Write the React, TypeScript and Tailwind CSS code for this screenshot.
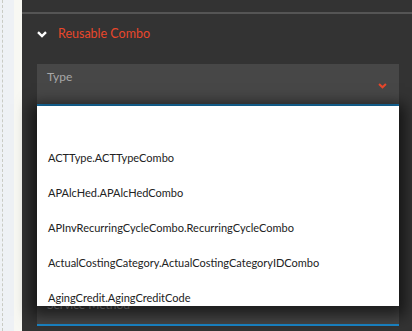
import { useState } from 'react'

const options = [
  '',
  'ACTType.ACTTypeCombo',
  'APAlcHed.APAlcHedCombo',
  'APInvRecurringCycleCombo.RecurringCycleCombo',
  'ActualCostingCategory.ActualCostingCategoryIDCombo',
  'AgingCredit.AgingCreditCode',
  'AgingDebit.AgingDebitCode',
]

function Chevron({ className }: { className?: string }) {
  return (
    <svg viewBox="0 0 10 7" className={className} fill="none" stroke="currentColor" strokeWidth="2.4">
      <path d="M1 1.2 L5 5 L9 1.2" />
    </svg>
  )
}

function Field({ label, arrow, tall }: { label: string; arrow?: boolean; tall?: boolean }) {
  return (
    <div className={tall ? 'relative h-[42px] bg-[#474747] border-b-2 border-[#1b87c9]' : 'relative h-[34px] bg-[#474747] border-b-2 border-[#1b87c9]'}>
      <div className="pl-[10px] pt-[4px] text-[12px] text-[#a8a8a8]">{label}</div>
      {arrow && <Chevron className="absolute right-[12px] top-[19px] w-[9px] h-[6px] text-[#e8472b]" />}
    </div>
  )
}

export default function App() {
  const [open] = useState(true)

  return (
    <div className="relative w-[412px] h-[331px] flex overflow-hidden" style={{ fontFamily: 'Lato, "Open Sans", sans-serif' }}>
      {/* left strip */}
      <div className="flex w-[22px] shrink-0">
        <div className="w-[14px] bg-[#eef1f5] pl-[2px]">
          <div className="h-full border-l border-dashed border-[#c9cbc4]" />
        </div>
        <div className="w-[8px] bg-[#f8f8f3]" />
      </div>

      {/* panel */}
      <div className="flex-1 bg-[#333333] flex flex-col">
        <div className="h-[12px]" />
        <div className="h-[2px] bg-[#555555]" />

        <div className="h-[40px] flex items-center pl-[15px] gap-[11px]">
          <Chevron className="w-[10px] h-[7px] text-white" />
          <span className="text-[12.5px] text-[#e8472b]">Reusable Combo</span>
        </div>

        <div className="mt-[10px] pl-[15px] pr-[13px] flex flex-col">
          <Field label="Type" arrow tall />
          <div className="h-[186px]" />
          <Field label="Service Method" />
        </div>
      </div>

      {/* open dropdown */}
      {open && (
        <div className="absolute left-[37px] top-[106px] w-[362px] h-[200px] bg-white overflow-hidden shadow-[0_4px_14px_6px_rgba(0,0,0,0.6)]">
          {options.map((o, i) => (
            <div key={i} className="h-[35px] flex items-center pl-[11px] text-[11px] text-[#222222] whitespace-nowrap">
              {o}
            </div>
          ))}
        </div>
      )}
    </div>
  )
}
